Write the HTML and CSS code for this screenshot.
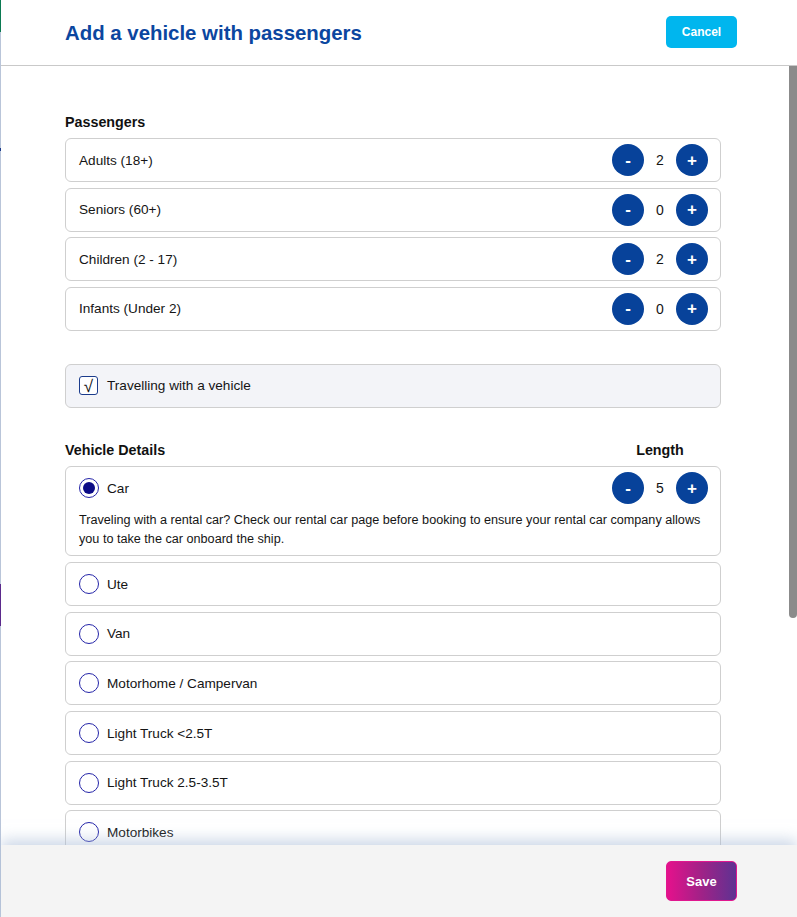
FILE: index.html
```html
<!DOCTYPE html>
<html lang="en">
<head>
<meta charset="utf-8">
<title>Add a vehicle with passengers</title>
<link rel="stylesheet" href="styles.css">
</head>
<body>
<div class="edge"></div>
<div class="modal">
  <header class="modal-header">
    <h1 class="title">Add a vehicle with passengers</h1>
    <button class="btn-cancel">Cancel</button>
  </header>
  <div class="modal-body">
    <div class="content">
      <h2 class="section-label">Passengers</h2>
      <div class="list">
        <div class="row">
          <span class="row-label">Adults (18+)</span>
          <div class="counter"><span class="round">-</span><span class="count">2</span><span class="round">+</span></div>
        </div>
        <div class="row">
          <span class="row-label">Seniors (60+)</span>
          <div class="counter"><span class="round">-</span><span class="count">0</span><span class="round">+</span></div>
        </div>
        <div class="row">
          <span class="row-label">Children (2 - 17)</span>
          <div class="counter"><span class="round">-</span><span class="count">2</span><span class="round">+</span></div>
        </div>
        <div class="row">
          <span class="row-label">Infants (Under 2)</span>
          <div class="counter"><span class="round">-</span><span class="count">0</span><span class="round">+</span></div>
        </div>
      </div>

      <div class="vehicle-toggle">
        <span class="checkbox">&#8730;</span>
        <span class="row-label">Travelling with a vehicle</span>
      </div>

      <div class="section-head">
        <h2 class="section-label">Vehicle Details</h2>
        <span class="length-label">Length</span>
      </div>
      <div class="list">
        <div class="row card">
          <div class="row-line">
            <span class="radio checked"></span>
            <span class="row-label">Car</span>
            <div class="counter"><span class="round">-</span><span class="count">5</span><span class="round">+</span></div>
          </div>
          <p class="note">Traveling with a rental car? Check our rental car page before booking to ensure your rental car company allows you to take the car onboard the ship.</p>
        </div>
        <div class="row"><div class="row-line"><span class="radio"></span><span class="row-label">Ute</span></div></div>
        <div class="row"><div class="row-line"><span class="radio"></span><span class="row-label">Van</span></div></div>
        <div class="row"><div class="row-line"><span class="radio"></span><span class="row-label">Motorhome / Campervan</span></div></div>
        <div class="row"><div class="row-line"><span class="radio"></span><span class="row-label">Light Truck &lt;2.5T</span></div></div>
        <div class="row"><div class="row-line"><span class="radio"></span><span class="row-label">Light Truck 2.5-3.5T</span></div></div>
        <div class="row"><div class="row-line"><span class="radio"></span><span class="row-label">Motorbikes</span></div></div>
      </div>
    </div>
    <div class="scrollbar"><div class="thumb"></div></div>
  </div>
  <footer class="modal-footer">
    <button class="btn-save">Save</button>
  </footer>
</div>
</body>
</html>
```

FILE: styles.css
```css
* { box-sizing: border-box; }

html, body {
  margin: 0;
  padding: 0;
  height: 917px;
  overflow: hidden;
}

body {
  display: flex;
  font-family: "Liberation Sans", Arial, sans-serif;
  color: #1a1a1a;
  background: #fff;
}

.edge {
  width: 1px;
  flex: none;
  background: linear-gradient(to bottom,
    #0b7a52 0, #0b7a52 32px,
    #b9c5d9 32px, #b9c5d9 148px,
    #1a3a8a 148px, #1a3a8a 151px,
    #b9c5d9 151px, #b9c5d9 584px,
    #5b2a8c 584px, #5b2a8c 626px,
    #b9c5d9 626px);
}

.modal {
  flex: 1;
  display: flex;
  flex-direction: column;
  height: 917px;
  min-width: 0;
}

.modal-header {
  height: 66px;
  flex: none;
  display: flex;
  align-items: center;
  justify-content: space-between;
  padding: 0 60px 1px 64px;
  border-bottom: 1px solid #c9c9c9;
}

.title {
  margin: 2px 0 0 0;
  font-size: 20.4px;
  font-weight: 700;
  color: #0b46a0;
}

.btn-cancel {
  width: 71px;
  height: 32px;
  border: none;
  border-radius: 5px;
  background: #00b6ee;
  color: #fff;
  font-family: inherit;
  font-size: 12px;
  font-weight: 700;
}

.modal-body {
  flex: 1;
  display: flex;
  min-height: 0;
  overflow: hidden;
}

.content {
  flex: 1;
  padding: 47.5px 0 0 64px;
}

.scrollbar {
  width: 8px;
  flex: none;
  background: #fff;
}

.thumb {
  height: 552px;
  background: #8b8b8b;
  border-radius: 0 0 4px 4px;
}

.section-label {
  margin: 0;
  font-size: 14.3px;
  font-weight: 700;
  line-height: 17px;
  color: #111;
}

.list {
  width: 656px;
  margin-top: 7.5px;
  display: flex;
  flex-direction: column;
  gap: 5.67px;
}

.row {
  min-height: 44px;
  border: 1px solid #cfcfcf;
  border-radius: 6px;
  padding: 5px 12px 5px 13px;
  display: flex;
  align-items: center;
  justify-content: space-between;
  background: #fff;
}

.card {
  display: block;
  padding-bottom: 6px;
}

.row-line {
  display: flex;
  align-items: center;
  min-height: 32px;
  width: 100%;
}

.row-label {
  font-size: 13.6px;
  color: #151515;
}

.counter {
  display: flex;
  align-items: center;
  margin-left: auto;
}

.round {
  width: 32px;
  height: 32px;
  border-radius: 50%;
  background: #07429a;
  color: #fff;
  font-size: 17px;
  font-weight: 700;
  display: flex;
  align-items: center;
  justify-content: center;
  line-height: 1;
}

.count {
  width: 32px;
  text-align: center;
  font-size: 14px;
  color: #151515;
}

.vehicle-toggle {
  width: 656px;
  height: 44px;
  margin-top: 33px;
  border: 1px solid #cfcfcf;
  border-radius: 6px;
  background: #f3f4f8;
  display: flex;
  align-items: center;
  padding: 0 13px;
  gap: 9px;
}

.checkbox {
  width: 19px;
  height: 19px;
  border: 1.5px solid #1b3c8c;
  border-radius: 3px;
  background: #fff;
  display: flex;
  align-items: center;
  justify-content: center;
  font-size: 17px;
  line-height: 1;
  color: #111;
  padding-top: 1px;
}

.section-head {
  width: 656px;
  margin-top: 34px;
  display: flex;
  align-items: center;
  justify-content: space-between;
  padding-right: 13px;
}

.length-label {
  width: 96px;
  text-align: center;
  font-size: 14.3px;
  font-weight: 700;
  color: #111;
}

.radio {
  width: 20px;
  height: 20px;
  border: 1.3px solid #2424a8;
  border-radius: 50%;
  margin-right: 8px;
  flex: none;
  display: flex;
  align-items: center;
  justify-content: center;
  background: #fff;
}

.radio.checked::after {
  content: "";
  width: 12px;
  height: 12px;
  border-radius: 50%;
  background: #0b0b86;
}

.note {
  margin: 7px 0 0 0;
  font-size: 12.65px;
  line-height: 19px;
  color: #151515;
}

.modal-footer {
  height: 72px;
  flex: none;
  background: #f4f4f4;
  display: flex;
  align-items: center;
  justify-content: flex-end;
  padding: 0 60px 0 0;
  box-shadow: 0 -5px 14px rgba(170, 188, 215, 0.6);
  position: relative;
}

.btn-save {
  width: 71px;
  height: 40px;
  border: 1px solid #e0178f;
  border-radius: 5px;
  background: linear-gradient(to right, #e5118c, #a02287 50%, #5e3292);
  color: #fff;
  font-family: inherit;
  font-size: 13px;
  font-weight: 700;
}
```
